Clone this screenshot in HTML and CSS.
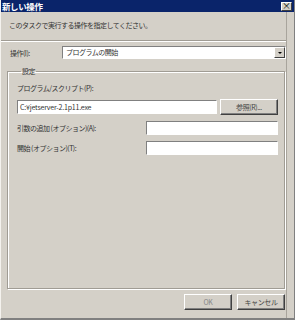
FILE: index.html
```html
<!DOCTYPE html>
<html lang="ja">
<head>
  <meta charset="UTF-8">
  <title>新しい操作</title>
  <link rel="stylesheet" href="styles.css">
</head>
<body>
  <div class="window">
    <div class="titlebar">
      <span class="title">新しい操作</span>
      <span class="close">×</span>
    </div>

    <div class="content">
      <p class="intro">このタスクで実行する操作を指定してください。</p>
      <div class="sep"></div>

      <div class="action-row">
        <label class="action-label">操作(I):</label>
        <div class="select">
          <span class="select-text">プログラムの開始</span>
          <span class="select-btn"><span class="arrow"></span></span>
        </div>
      </div>

      <fieldset class="group">
        <legend>設定</legend>
        <div class="field-label">プログラム/スクリプト(P):</div>
        <div class="program-row">
          <div class="input program-input">C:¥jetserver-2.1p11.exe</div>
          <button class="btn browse">参照(R)...</button>
        </div>
        <div class="arg-row">
          <span class="arg-label">引数の追加 (オプション)(A):</span>
          <div class="input arg-input"></div>
        </div>
        <div class="arg-row">
          <span class="arg-label">開始 (オプション)(T):</span>
          <div class="input arg-input"></div>
        </div>
      </fieldset>

      <div class="footer">
        <button class="btn ok">OK</button>
        <button class="btn">キャンセル</button>
      </div>
    </div>
  </div>
</body>
</html>
```

FILE: styles.css
```css
* {
  box-sizing: border-box;
}

body {
  margin: 0;
  font-family: "Noto Sans CJK JP", "DejaVu Sans", sans-serif;
  font-size: 7px;
  letter-spacing: -0.5px;
  color: #333;
  background: #d4d0c8;
}

.window {
  width: 295px;
  height: 320px;
  display: flex;
  flex-direction: column;
  background: #d4d0c8;
  border-left: 1px solid #f4f2ee;
  border-right: 1px solid #808080;
  border-bottom: 2px solid #808080;
}

.titlebar {
  height: 12px;
  display: flex;
  align-items: center;
  justify-content: space-between;
  padding: 0 2px 0 1px;
  background: #0a246a;
}

.title {
  color: #fff;
  font-weight: bold;
  font-size: 8.5px;
  letter-spacing: -0.4px;
  line-height: 12px;
}

.close {
  width: 11px;
  height: 9px;
  background: #d4d0c8;
  border: 1px solid;
  border-color: #fff #404040 #404040 #fff;
  color: #000;
  font-size: 9px;
  letter-spacing: 0;
  line-height: 6px;
  text-align: center;
}

.content {
  flex: 1;
  display: flex;
  flex-direction: column;
  width: 286px;
  border-right: 1px solid #a8a49c;
}

.intro {
  margin: 0;
  padding: 9px 0 0 8px;
  height: 28px;
  line-height: 9px;
}

.sep {
  width: 285px;
  border-top: 1px solid #a09c94;
  border-bottom: 1px solid #fff;
}

.action-row {
  display: flex;
  align-items: center;
  margin-top: 4px;
  height: 13px;
}

.action-label {
  width: 61px;
  padding-left: 9px;
}

.select {
  width: 224px;
  height: 13px;
  display: flex;
  background: #fff;
  border: 1px solid;
  border-color: #808080 #fff #fff #808080;
}

.select-text {
  flex: 1;
  padding-left: 3px;
  line-height: 11px;
}

.select-btn {
  width: 11px;
  height: 11px;
  display: flex;
  align-items: center;
  justify-content: center;
  background: #d4d0c8;
  border: 1px solid;
  border-color: #fff #404040 #404040 #fff;
}

.arrow {
  width: 0;
  height: 0;
  border-left: 2px solid transparent;
  border-right: 2px solid transparent;
  border-top: 2px solid #000;
}

.group {
  margin: 8px 0 0 6px;
  width: 278px;
  height: 222px;
  padding: 8px 0 0 9px;
  border: 1px solid #a09c94;
  box-shadow: inset 1px 1px 0 #fff, 1px 1px 0 #fff;
}

.group legend {
  padding: 0 1px;
  margin-left: 4px;
  line-height: 9px;
}

.field-label {
  height: 15px;
  line-height: 9px;
}

.program-row {
  display: flex;
  align-items: center;
  gap: 3px;
}

.input {
  height: 14px;
  background: #fff;
  border: 1px solid;
  border-color: #808080 #fff #fff #808080;
  padding-left: 2px;
  line-height: 12px;
}

.program-input {
  width: 200px;
  letter-spacing: -0.2px;
}

.btn {
  font-family: inherit;
  font-size: 7px;
  letter-spacing: -0.4px;
  color: #444;
  background: #d4d0c8;
  border: 1px solid;
  border-color: #fff #404040 #404040 #fff;
  box-shadow: inset -1px -1px 0 #808080;
  padding: 0;
  height: 16px;
}

.browse {
  width: 58px;
}

.arg-row {
  display: flex;
  align-items: center;
  margin-top: 5px;
  height: 15px;
}

.arg-label {
  width: 129px;
}

.arg-input {
  width: 132px;
}

.footer {
  display: flex;
  justify-content: flex-end;
  gap: 5px;
  margin-top: 5px;
  padding-right: 1px;
}

.footer .btn {
  width: 48px;
}

.ok {
  color: #888;
}
```
